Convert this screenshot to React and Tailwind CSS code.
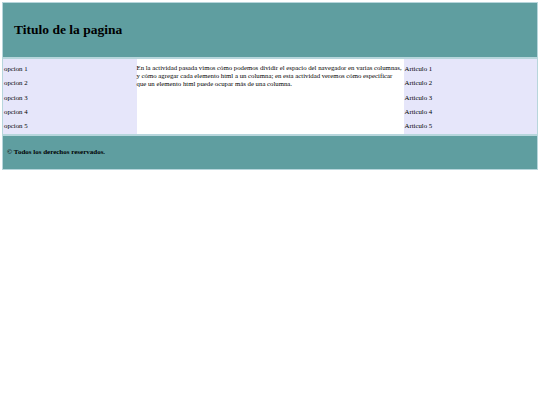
export default function App() {
  const opciones = ['opcion 1', 'opcion 2', 'opcion 3', 'opcion 4', 'opcion 5'];
  const articulos = ['Articulo 1', 'Articulo 2', 'Articulo 3', 'Articulo 4', 'Articulo 5'];

  return (
    <div className="min-h-screen bg-white pt-[2px] px-[2px] font-['Liberation_Serif',serif] text-black">
      <div className="grid grid-cols-[1fr_2fr_1fr] gap-y-[2px] border border-[#b7d6dc] bg-[#b7d6dc]">
        <header className="col-span-3 flex h-[54px] items-center bg-[#5f9ea0] pl-[11px]">
          <h1 className="text-[13.5px] font-bold leading-none">Titulo de la pagina</h1>
        </header>

        <nav className="bg-[#e6e6fa] pt-[6px] pb-[4px]">
          <ul className="flex flex-col gap-[6.3px] text-[6.8px] leading-[8px]">
            {opciones.map(o => (
              <li key={o} className="pl-[1px]">{o}</li>
            ))}
          </ul>
        </nav>

        <section className="bg-white pt-[5px]">
          <p className="text-[6.78px] leading-[8px]">
            En la actividad pasada vimos cómo podemos dividir el espacio del navegador en varias columnas,
            y cómo agregar cada elemento html a un columna; en esta actividad veremos cómo especificar
            que un elemento html puede ocupar más de una columna.
          </p>
        </section>

        <aside className="bg-[#e6e6fa] pt-[6px] pb-[4px]">
          <ul className="flex flex-col gap-[6.3px] text-[6.8px] leading-[8px]">
            {articulos.map(a => (
              <li key={a} className="pl-[1px]">{a}</li>
            ))}
          </ul>
        </aside>

        <footer className="col-span-3 flex h-[33px] items-center bg-[#5f9ea0] pl-[4px]">
          <p className="text-[7px] font-bold">© Todos los derechos reservados.</p>
        </footer>
      </div>
    </div>
  );
}
